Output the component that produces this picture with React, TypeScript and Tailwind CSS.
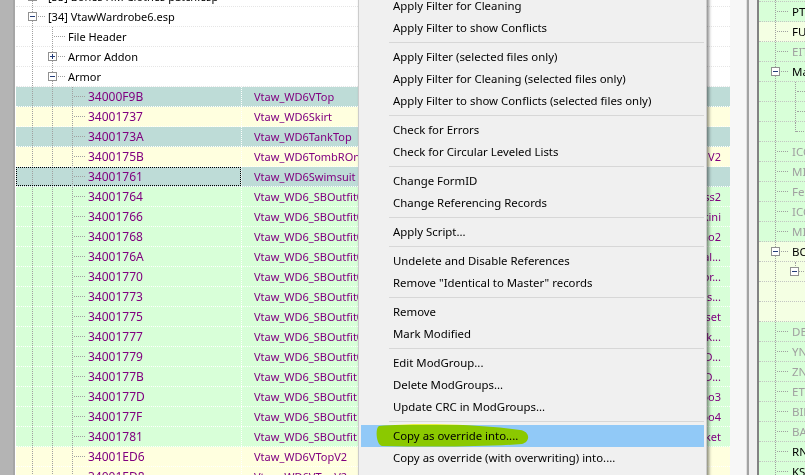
import React from 'react';

const LINE = 'border-l border-dotted border-[#a0a0a0]';

type Rec = { id: string; ed: string; name?: string; bg: string; focus?: boolean };

const TEAL = 'bg-[#bedcd7]';
const YEL = 'bg-[#ffffdf]';
const GRN = 'bg-[#d8ffd8]';

const records: Rec[] = [
  { id: '34000F9B', ed: 'Vtaw_WD6VTop', bg: TEAL },
  { id: '34001737', ed: 'Vtaw_WD6Skirt', bg: YEL },
  { id: '3400173A', ed: 'Vtaw_WD6TankTop', bg: TEAL },
  { id: '3400175B', ed: 'Vtaw_WD6TombROnepieceV2', name: 'Tomb Raider Onepiece V2', bg: YEL },
  { id: '34001761', ed: 'Vtaw_WD6Swimsuit', bg: TEAL, focus: true },
  { id: '34001764', ed: 'Vtaw_WD6_SBOutfit01', name: 'SB Outfit Dress2', bg: GRN },
  { id: '34001766', ed: 'Vtaw_WD6_SBOutfit02', name: 'SB Outfit Bikini', bg: GRN },
  { id: '34001768', ed: 'Vtaw_WD6_SBOutfit03', name: 'SB Outfit Kimono2', bg: GRN },
  { id: '3400176A', ed: 'Vtaw_WD6_SBOutfit04', name: 'SB Outfit Formal...', bg: GRN },
  { id: '34001770', ed: 'Vtaw_WD6_SBOutfit05', name: 'SB Outfit Sailor...', bg: GRN },
  { id: '34001773', ed: 'Vtaw_WD6_SBOutfit06', name: 'SB Outfit Trousers...', bg: GRN },
  { id: '34001775', ed: 'Vtaw_WD6_SBOutfit07', name: 'SB Outfit Corset', bg: GRN },
  { id: '34001777', ed: 'Vtaw_WD6_SBOutfit08', name: 'SB Outfit Black...', bg: GRN },
  { id: '34001779', ed: 'Vtaw_WD6_SBOutfit09', name: 'SB Outfit OD...', bg: GRN },
  { id: '3400177B', ed: 'Vtaw_WD6_SBOutfit10', name: 'SB Outfit OD...', bg: GRN },
  { id: '3400177D', ed: 'Vtaw_WD6_SBOutfit11', name: 'SB Outfit Combo3', bg: GRN },
  { id: '3400177F', ed: 'Vtaw_WD6_SBOutfit12', name: 'SB Outfit Combo4', bg: GRN },
  { id: '34001781', ed: 'Vtaw_WD6_SBOutfit13', name: 'SB Outfit Jacket', bg: GRN },
  { id: '34001ED6', ed: 'Vtaw_WD6VTopV2', bg: YEL },
  { id: '34001ED8', ed: 'Vtaw_WD6VTopV2', bg: YEL },
];

const menuItems = [
  'Apply Filter for Cleaning',
  'Apply Filter to show Conflicts',
  '-',
  'Apply Filter (selected files only)',
  'Apply Filter for Cleaning (selected files only)',
  'Apply Filter to show Conflicts (selected files only)',
  '-',
  'Check for Errors',
  'Check for Circular Leveled Lists',
  '-',
  'Change FormID',
  'Change Referencing Records',
  '-',
  'Apply Script...',
  '-',
  'Undelete and Disable References',
  'Remove "Identical to Master" records',
  '-',
  'Remove',
  'Mark Modified',
  '-',
  'Edit ModGroup...',
  'Delete ModGroups...',
  'Update CRC in ModGroups...',
  '-',
  'Copy as override into....',
  'Copy as override (with overwriting) into....',
];

// right-hand record view rows
type Side = { t?: string; dark?: boolean; bg?: string; box?: boolean; lvl?: number; half?: boolean; last?: boolean };
const SY = 'bg-[#f4ffe3]';
const side: Side[] = [
  { t: 'OBND' },
  { t: 'PTDA', dark: true },
  { t: 'FULL', dark: true, bg: SY },
  { t: 'EITM' },
  { t: 'Male world model', dark: true, box: true },
  { lvl: 2 },
  { lvl: 2 },
  { lvl: 2, last: true },
  { t: 'ICON' },
  { t: 'MICO' },
  { t: 'Female world model' },
  { t: 'ICO2' },
  { t: 'MIC2' },
  { t: 'BOD2', dark: true, box: true, bg: SY },
  { lvl: 2, half: true, bg: SY },
  { lvl: 3, bg: SY },
  { lvl: 3, bg: SY },
  { t: 'DESC' },
  { t: 'YNAM' },
  { t: 'ZNAM' },
  { t: 'ETYP' },
  { t: 'BIDS' },
  { t: 'BAMT' },
  { t: 'RNAM', dark: true },
  { t: 'KSIZ', dark: true },
];

function ExpandBox({ plus }: { plus?: boolean }) {
  return (
    <div className="absolute left-[-5px] top-[5px] z-10 w-[9px] h-[9px] border border-[#919191] bg-white flex items-center justify-center">
      <div className="relative w-[5px] h-[1px] bg-[#233c78]">
        {plus && <div className="absolute left-[2px] top-[-2px] w-[1px] h-[5px] bg-[#233c78]" />}
      </div>
    </div>
  );
}

function Guide({ w = 'w-[20px]' }: { w?: string }) {
  return <div className={`${w} h-full shrink-0 ${LINE}`} />;
}

function Connector({ w = 'w-[16px]', box, plus }: { w?: string; box?: boolean; plus?: boolean }) {
  return (
    <div className={`relative ${w} h-full shrink-0 flex items-center ${LINE}`}>
      <div className="ml-[1px] w-[11px] border-t border-dotted border-[#a0a0a0]" />
      {box && <ExpandBox plus={plus} />}
    </div>
  );
}

function TopRow({ children }: { children: React.ReactNode }) {
  return (
    <div className="flex items-center h-[20px] border-b border-dotted border-[#e6e6e6] text-black text-[11px]">
      <div className="w-[16px] shrink-0" />
      {children}
    </div>
  );
}

function RecordRow({ r }: { r: Rec }) {
  return (
    <div className={`flex h-[20px] border-b border-dotted border-white text-[#800080] text-[11px] ${r.bg}`}>
      <div className={`flex items-center w-[225px] shrink-0 ${r.focus ? 'outline outline-1 outline-dotted outline-black -outline-offset-1' : ''}`}>
        <div className="w-[16px] shrink-0" />
        <Guide />
        <Guide />
        <Connector />
        <span className="text-[12px]">{r.id}</span>
      </div>
      <div className="flex items-center w-[319px] shrink-0 pl-[12px] border-l border-dotted border-white">{r.ed}</div>
      <div className="flex items-center justify-end flex-1 min-w-0 pr-[9px] whitespace-nowrap overflow-hidden border-l border-dotted border-white">
        {r.name}
      </div>
    </div>
  );
}

function SideRow({ s }: { s: Side }) {
  return (
    <div className={`flex items-center h-[20px] border-b border-dotted border-[#c4c4c4] whitespace-nowrap text-[11.5px] ${s.bg ?? GRN}`}>
      <div className="w-[16px] shrink-0" />
      {s.lvl ? (
        <>
          <Guide />
          {s.lvl === 2 && (
            <div className={`relative w-[20px] h-full shrink-0 flex items-center ${s.half || s.last ? '' : LINE}`}>
              {(s.half || s.last) && <div className={`absolute left-0 top-0 h-[10px] ${LINE}`} />}
              <div className="ml-[1px] w-[10px] border-t border-dotted border-[#a0a0a0]" />
              {s.half && <ExpandBox />}
            </div>
          )}
        </>
      ) : (
        <>
          <Connector w="w-[17px]" box={s.box} />
          <span className={s.dark ? 'text-black' : 'text-[#a0a0a0]'}>{s.t}</span>
        </>
      )}
    </div>
  );
}

function ContextMenu() {
  return (
    <div className="absolute left-[358px] top-[-5px] w-[349px] pb-[12px] bg-[#f0f0f0] border-x border-[#cccccc] shadow-[2px_2px_3px_rgba(0,0,0,0.45)] text-black text-[11.4px]">
      {menuItems.map((item, i) =>
        item === '-' ? (
          <div key={i} className="h-[7px] flex items-center ml-[30px] mr-[2px]">
            <div className="w-full h-[1px] bg-[#d7d7d7]" />
          </div>
        ) : (
          <div
            key={i}
            className={`relative h-[22px] mx-[2px] pl-[32px] flex items-center whitespace-nowrap ${
              item === 'Copy as override into....' ? 'bg-[#91c9f7]' : ''
            }`}
          >
            {item}
            {item === 'Copy as override into....' && (
              <svg className="absolute left-[15px] top-[-3px] mix-blend-multiply" width="154" height="28" viewBox="0 0 154 28">
                <path
                  d="M3 4 C40 1 100 2 144 8 C154 9 155 20 146 22 C110 25 50 25 6 24 C0 23 -1 6 3 4 Z"
                  fill="#f4ff00"
                />
              </svg>
            )}
          </div>
        )
      )}
    </div>
  );
}

export default function App() {
  return (
    <div className="relative w-[805px] h-[475px] overflow-hidden flex bg-[#f0f0f0] font-['Noto_Sans'] text-[12px] leading-none">
      <div className="w-[15px] h-full shrink-0 bg-[#b4b4b4] border-r-2 border-[#a6a6a6]" />

      {/* main record tree */}
      <div className="w-[715px] h-full shrink-0 bg-white pl-[1px] overflow-hidden">
        <div className="mt-[-13px]">
          <TopRow>
            <Connector box plus />
            <span>[33] Bones HM Clothes patch.esp</span>
          </TopRow>
          <TopRow>
            <Connector box />
            <span>[34] VtawWardrobe6.esp</span>
          </TopRow>
          <TopRow>
            <Guide />
            <Connector />
            <span>File Header</span>
          </TopRow>
          <TopRow>
            <Guide />
            <Connector box plus />
            <span>Armor Addon</span>
          </TopRow>
          <TopRow>
            <Guide />
            <Connector box />
            <span>Armor</span>
          </TopRow>
          {records.map((r) => (
            <RecordRow key={r.id + r.bg} r={r} />
          ))}
        </div>
      </div>

      {/* scroll bar / splitter */}
      <div className="w-[16px] h-full shrink-0 bg-[#f7f7f7]" />
      <div className="w-[1px] h-full shrink-0 bg-[#e0e0e0]" />
      <div className="w-[2px] h-full shrink-0 bg-[#a3a3a3]" />
      <div className="w-[8px] h-full shrink-0 bg-[#f0f0f0]" />

      {/* right record view */}
      <div className="flex-1 h-full border-l-2 border-[#828282] overflow-hidden">
        <div className="mt-[-18px]">
          {side.map((s, i) => (
            <SideRow key={i} s={s} />
          ))}
        </div>
      </div>

      <ContextMenu />
    </div>
  );
}
